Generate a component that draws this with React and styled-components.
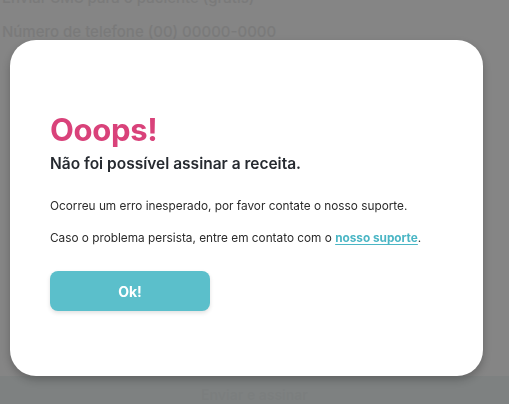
import React from "react";
import styled, { createGlobalStyle } from "styled-components";

const GlobalStyle = createGlobalStyle`
  html, body {
    margin: 0;
    padding: 0;
    width: 100%;
    height: 100%;
    overflow: hidden;
    background: #ffffff;
    font-family: Inter, "Noto Sans", "Liberation Sans", sans-serif;
  }
  #root {
    height: 100%;
  }
`;

const Page = styled.div`
  display: flex;
  flex-direction: column;
  height: calc(100% + 12px);
  margin-top: -12px;
  color: #eaeaea;
`;

const PageBody = styled.div`
  flex: 1;
  display: flex;
  flex-direction: column;
  gap: 14px;
  padding: 0 2px;
`;

const FieldLabel = styled.div`
  font-size: 15px;
  font-weight: 500;
  line-height: 20px;
  white-space: nowrap;
`;

const Footer = styled.div`
  box-sizing: border-box;
  height: 28px;
  display: flex;
  align-items: center;
  justify-content: center;
  background: #f2f8f8;
  color: #ecf2f2;
  font-size: 14px;
  font-weight: 600;
  padding-top: 8px;
`;

const Overlay = styled.div`
  position: fixed;
  inset: 0;
  background: rgba(0, 0, 0, 0.48);
  display: flex;
  align-items: flex-start;
  padding: 40px 0 0 10px;
`;

const Modal = styled.div`
  width: 473px;
  height: 336px;
  box-sizing: border-box;
  background: #ffffff;
  border-radius: 26px;
  box-shadow: 0 4px 10px rgba(0, 0, 0, 0.25);
  padding: 70px 40px 0 40px;
  display: flex;
  flex-direction: column;
  align-items: flex-start;
`;

const Title = styled.h1`
  margin: 0;
  font-size: 31px;
  line-height: 40px;
  font-weight: 700;
  color: #d9427a;
  letter-spacing: -0.3px;
`;

const Subtitle = styled.h2`
  margin: 4px 0 0;
  font-size: 15.5px;
  line-height: 20px;
  font-weight: 600;
  color: #262a30;
`;

const Text = styled.p`
  margin: ${(p) => p.$top}px 0 0;
  font-size: 11.8px;
  line-height: 16px;
  color: #2b2b2b;
`;

const SupportLink = styled.a`
  color: #4bb6c5;
  font-weight: 700;
  text-decoration: underline;
  text-underline-offset: 2px;
  cursor: pointer;
`;

const OkButton = styled.button`
  margin-top: 25px;
  width: 160px;
  height: 40px;
  border: none;
  border-radius: 8px;
  background: #5bbfcb;
  color: #ffffff;
  font-family: inherit;
  font-size: 14px;
  font-weight: 700;
  box-shadow: 0 2px 4px rgba(0, 0, 0, 0.12);
  cursor: pointer;
`;

export default function App() {
  return (
    <>
      <GlobalStyle />
      <Page>
        <PageBody>
          <FieldLabel>Enviar SMS para o paciente (grátis)</FieldLabel>
          <FieldLabel>Número de telefone (00) 00000-0000</FieldLabel>
        </PageBody>
        <Footer>Enviar e assinar</Footer>
      </Page>
      <Overlay>
        <Modal>
          <Title>Ooops!</Title>
          <Subtitle>Não foi possível assinar a receita.</Subtitle>
          <Text $top={24}>
            Ocorreu um erro inesperado, por favor contate o nosso suporte.
          </Text>
          <Text $top={16}>
            Caso o problema persista, entre em contato com o{" "}
            <SupportLink>nosso suporte</SupportLink>.
          </Text>
          <OkButton>Ok!</OkButton>
        </Modal>
      </Overlay>
    </>
  );
}
